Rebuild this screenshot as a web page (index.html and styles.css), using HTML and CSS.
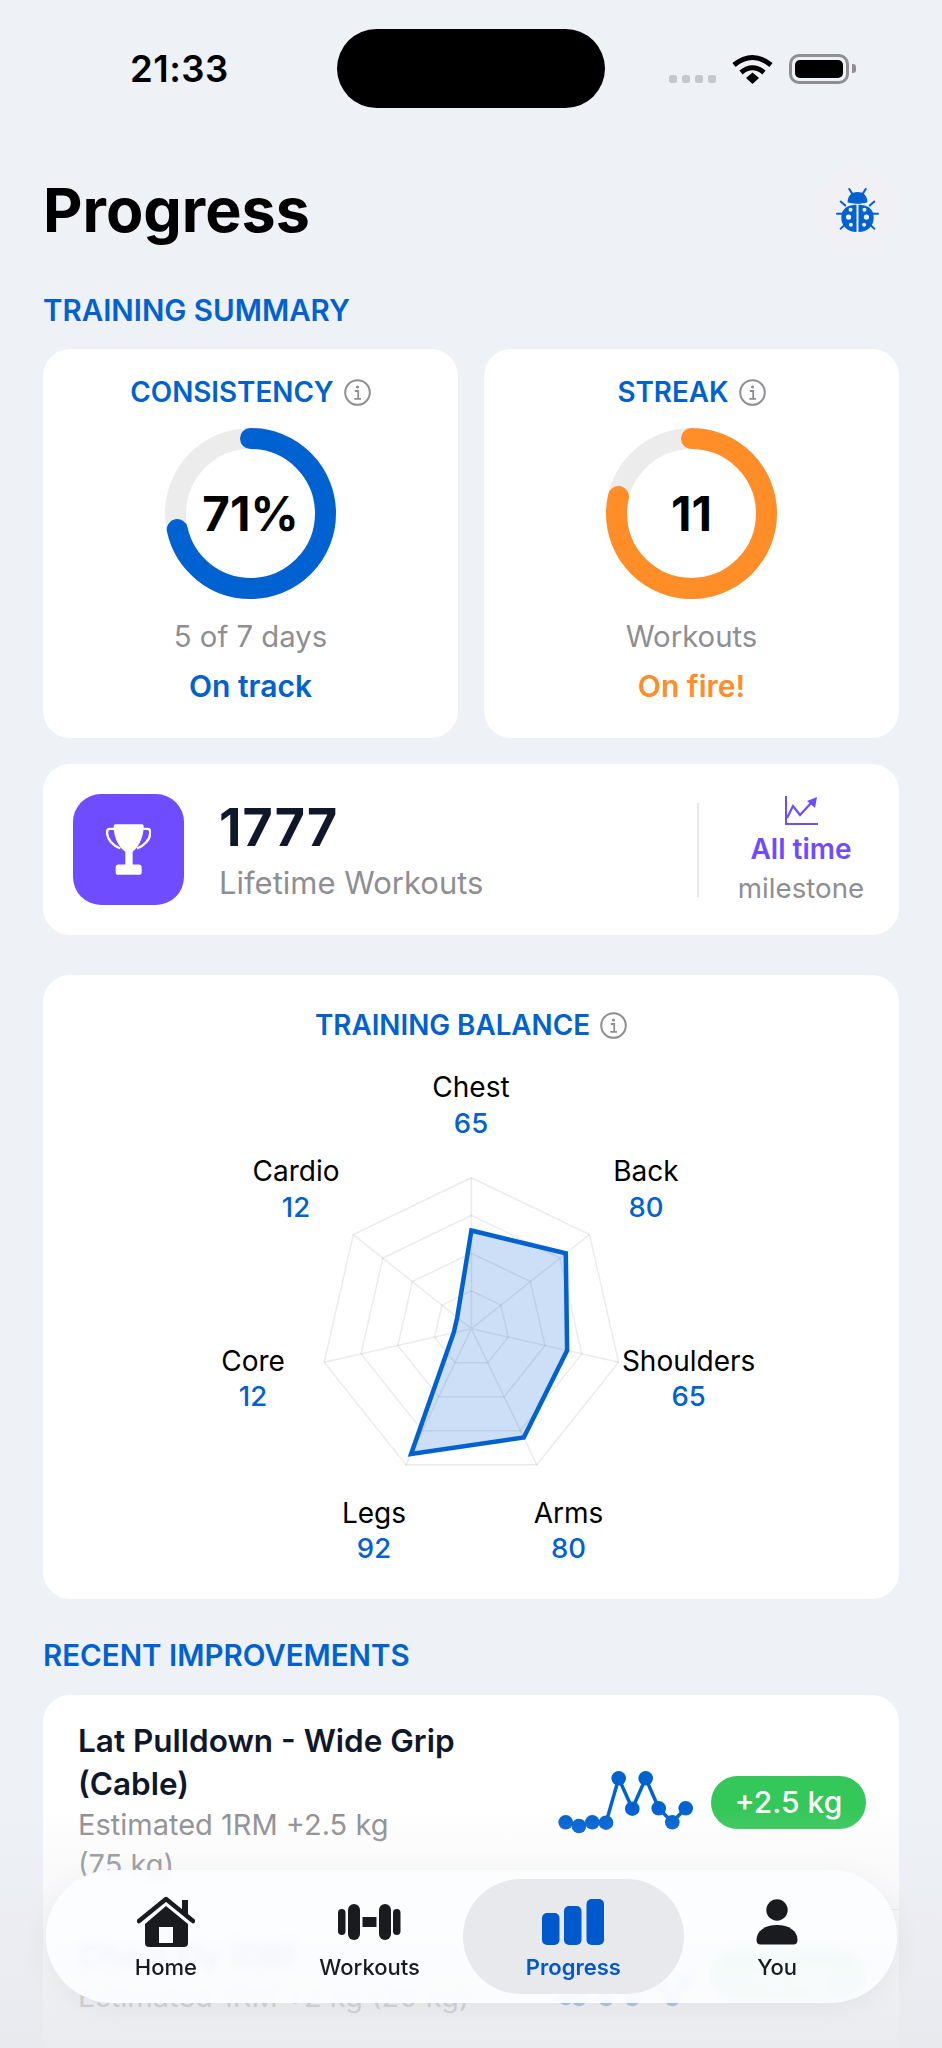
FILE: index.html
```html
<!DOCTYPE html>
<html lang="en">
<head>
    <meta charset="UTF-8">
    <meta name="viewport" content="width=device-width, initial-scale=1.0">
    <title>Progress</title>
    <link rel="stylesheet" href="styles.css">
</head>
<body>
    <div class="screen">
        <div class="status-bar">
            <span class="time">21:33</span>
            <div class="island"></div>
            <div class="signal"><i></i><i></i><i></i><i></i></div>
            <svg class="wifi" viewBox="0 0 41 30">
                <path d="M2 11 Q20.5 -4 39 11" fill="none" stroke="#000" stroke-width="5"/>
                <path d="M9 18.500 Q20.500 9 32 18.500" fill="none" stroke="#000" stroke-width="5"/>
                <path d="M14 24 L20.500 18.500 L27 24 L20.500 30 Z" fill="#000"/>
            </svg>
            <div class="battery"><div class="battery-fill"></div></div>
            <div class="battery-nub"></div>
        </div>

        <div class="header">
            <h1>Progress</h1>
            <div class="bug-button">
                <svg width="43" height="44" viewBox="585 475 130 133">
                    <path d="M620 518 C620 497 634 487 650 487 C666 487 680 497 680 518 C662 524 638 524 620 518 Z" fill="#0061d1"/>
                    <g stroke="#0061d1" stroke-width="6" stroke-linecap="round" fill="none">
                        <path d="M634 492 L625 478"/>
                        <path d="M666 492 L675 478"/>
                        <path d="M599 516 L613 528"/>
                        <path d="M701 516 L687 528"/>
                        <path d="M588 553 L606 553"/>
                        <path d="M712 553 L694 553"/>
                        <path d="M599 598 L613 585"/>
                        <path d="M701 598 L687 585"/>
                    </g>
                    <path d="M647 526 C620 526 601 538 601 565 C601 591 620 608 647 608 Z" fill="#0061d1"/>
                    <path d="M653 526 C680 526 699 538 699 565 C699 591 680 608 653 608 Z" fill="#0061d1"/>
                    <g fill="#f1f0f5">
                        <circle cx="629" cy="541" r="6"/>
                        <circle cx="623" cy="563" r="8"/>
                        <circle cx="630" cy="586" r="6"/>
                        <circle cx="671" cy="541" r="6"/>
                        <circle cx="677" cy="563" r="8"/>
                        <circle cx="670" cy="586" r="6"/>
                    </g>
                </svg>
            </div>
        </div>

        <div class="section-label summary-label">TRAINING SUMMARY</div>

        <div class="summary-row">
            <div class="card ring-card">
                <div class="card-title">
                    CONSISTENCY
                    <svg class="info" viewBox="0 0 27 27">
                        <circle cx="13.500" cy="13.500" r="12.300" fill="none" stroke="#8e8e93" stroke-width="2"/>
                        <circle cx="13.500" cy="8" r="1.600" fill="#8e8e93"/>
                        <path d="M10.800 12 H14.200 V19.500 M10.300 19.800 H17" fill="none" stroke="#8e8e93" stroke-width="1.800"/>
                    </svg>
                </div>
                <div class="ring">
                    <svg width="171" height="171" viewBox="0 0 171 171">
                        <circle cx="85.500" cy="85.500" r="75" class="ring-track"/>
                        <circle cx="85.500" cy="85.500" r="75" class="ring-value blue" stroke-dasharray="336.600 471.200" transform="rotate(-90 85.500 85.500)"/>
                    </svg>
                    <div class="ring-number">71%</div>
                </div>
                <div class="ring-sub">5 of 7 days</div>
                <div class="ring-status blue-text">On track</div>
            </div>

            <div class="card ring-card">
                <div class="card-title">
                    STREAK
                    <svg class="info" viewBox="0 0 27 27">
                        <circle cx="13.500" cy="13.500" r="12.300" fill="none" stroke="#8e8e93" stroke-width="2"/>
                        <circle cx="13.500" cy="8" r="1.600" fill="#8e8e93"/>
                        <path d="M10.800 12 H14.200 V19.500 M10.300 19.800 H17" fill="none" stroke="#8e8e93" stroke-width="1.800"/>
                    </svg>
                </div>
                <div class="ring">
                    <svg width="171" height="171" viewBox="0 0 171 171">
                        <circle cx="85.500" cy="85.500" r="75" class="ring-track"/>
                        <circle cx="85.500" cy="85.500" r="75" class="ring-value orange" stroke-dasharray="370 471.200" transform="rotate(-90 85.500 85.500)"/>
                    </svg>
                    <div class="ring-number">11</div>
                </div>
                <div class="ring-sub">Workouts</div>
                <div class="ring-status orange-text">On fire!</div>
            </div>
        </div>

        <div class="card lifetime-card">
            <div class="trophy-box">
                <svg width="45" height="51" viewBox="107 105 135 152">
                    <path d="M135 105 H215 C218 105 220 107 220 112 C220 150 200 178 187 188 V226 H205 C211 226 214 229 214 235 V250 C214 254 211 257 207 257 H143 C139 257 136 254 136 250 V235 C136 229 139 226 145 226 H165 V188 C150 178 130 150 130 112 C130 107 132 105 135 105 Z" fill="#fff"/>
                    <path d="M134 119 H118 C112 119 110 123 110 130 C110 150 128 170 150 178" fill="none" stroke="#fff" stroke-width="7"/>
                    <path d="M216 119 H232 C238 119 240 123 240 130 C240 150 222 170 200 178" fill="none" stroke="#fff" stroke-width="7"/>
                </svg>
            </div>
            <div class="lifetime-text">
                <div class="lifetime-number">1777</div>
                <div class="lifetime-label">Lifetime Workouts</div>
            </div>
            <div class="lifetime-divider"></div>
            <div class="milestone">
                <svg width="33" height="29" viewBox="0 0 33 29">
                    <path d="M1 0 V28 H33" fill="none" stroke="#6f4cff" stroke-width="2"/>
                    <path d="M2 22 L8 10 L15 19 L27 6" fill="none" stroke="#6f4cff" stroke-width="2.200"/>
                    <path d="M22 5 L32 1 L30 12 Z" fill="#6f4cff"/>
                </svg>
                <div class="milestone-top">All time</div>
                <div class="milestone-bottom">milestone</div>
            </div>
        </div>

        <div class="card balance-card">
            <div class="card-title">
                TRAINING BALANCE
                <svg class="info" viewBox="0 0 27 27">
                    <circle cx="13.500" cy="13.500" r="12.300" fill="none" stroke="#8e8e93" stroke-width="2"/>
                    <circle cx="13.500" cy="8" r="1.600" fill="#8e8e93"/>
                    <path d="M10.800 12 H14.200 V19.500 M10.300 19.800 H17" fill="none" stroke="#8e8e93" stroke-width="1.800"/>
                </svg>
            </div>
            <svg class="radar" width="856" height="557" viewBox="0 0 856 557">
                <g transform="translate(428.400 286.700)">
                    <g class="radar-grid">
                        <polygon points="0,-151 118.100,-94.100 147.200,33.600 65.500,136.100 -65.500,136.100 -147.200,33.600 -118.100,-94.100"/>
                        <polygon points="0,-113.300 88.500,-70.600 110.400,25.200 49.100,102 -49.100,102 -110.400,25.200 -88.500,-70.600"/>
                        <polygon points="0,-75.500 59,-47.100 73.600,16.800 32.800,68 -32.800,68 -73.600,16.800 -59,-47.100"/>
                        <polygon points="0,-37.800 29.500,-23.500 36.800,8.400 16.400,34 -16.400,34 -36.800,8.400 -29.500,-23.500"/>
                        <path d="M0 0 L0 -151 M0 0 L118.100 -94.100 M0 0 L147.200 33.600 M0 0 L65.500 136.100 M0 0 L-65.500 136.100 M0 0 L-147.200 33.600 M0 0 L-118.100 -94.100"/>
                    </g>
                    <polygon class="radar-shape" points="0,-98.200 94.400,-75.300 95.700,21.800 52.400,108.800 -60.300,125.200 -17.700,4 -14.200,-11.300"/>
                </g>
                <text class="radar-name" x="428" y="55">Chest</text>
                <text class="radar-num" x="428" y="91">65</text>
                <text class="radar-name" x="603" y="139">Back</text>
                <text class="radar-num" x="603" y="175">80</text>
                <text class="radar-name" x="645.600" y="329">Shoulders</text>
                <text class="radar-num" x="645.600" y="364">65</text>
                <text class="radar-name" x="525.600" y="481">Arms</text>
                <text class="radar-num" x="525.600" y="516">80</text>
                <text class="radar-name" x="331" y="481">Legs</text>
                <text class="radar-num" x="331" y="516">92</text>
                <text class="radar-name" x="210" y="329">Core</text>
                <text class="radar-num" x="210" y="364">12</text>
                <text class="radar-name" x="253" y="139">Cardio</text>
                <text class="radar-num" x="253" y="175">12</text>
            </svg>
        </div>

        <div class="section-label recent-label">RECENT IMPROVEMENTS</div>

        <div class="card recent-card">
            <div class="row">
                <div class="row-text">
                    <div class="row-title">Lat Pulldown - Wide Grip (Cable)</div>
                    <div class="row-sub">Estimated 1RM +2.5 kg (75&nbsp;kg)</div>
                </div>
                <svg class="spark" width="140" height="68" viewBox="0 0 140 68">
                    <polyline points="10.700,54.300 24,58 37.300,54.300 51,54.700 63.700,10.300 77.300,40.700 90.700,10.300 103.700,40.300 117.300,54.300 130.700,40.300"/>
                    <circle cx="10.700" cy="54.300" r="7.300"/>
                    <circle cx="24" cy="58" r="7.300"/>
                    <circle cx="37.300" cy="54.300" r="7.300"/>
                    <circle cx="51" cy="54.700" r="7.300"/>
                    <circle cx="63.700" cy="10.300" r="7.300"/>
                    <circle cx="77.300" cy="40.700" r="7.300"/>
                    <circle cx="90.700" cy="10.300" r="7.300"/>
                    <circle cx="103.700" cy="40.300" r="7.300"/>
                    <circle cx="117.300" cy="54.300" r="7.300"/>
                    <circle cx="130.700" cy="40.300" r="7.300"/>
                </svg>
                <div class="badge">+2.5 kg</div>
            </div>
            <div class="row">
                <div class="row-text">
                    <div class="row-title">Chest Fly (DB)</div>
                    <div class="row-sub">Estimated 1RM +2 kg (20 kg)</div>
                </div>
                <svg class="spark" width="140" height="68" viewBox="0 0 140 68">
                    <polyline points="10.700,56 24,57 37.300,8 51,57 63.700,8 77.300,57 90.700,40 103.700,40 117.300,57 130.700,40"/>
                    <circle cx="10.700" cy="56" r="7.300"/>
                    <circle cx="24" cy="57" r="7.300"/>
                    <circle cx="37.300" cy="8" r="7.300"/>
                    <circle cx="51" cy="57" r="7.300"/>
                    <circle cx="63.700" cy="8" r="7.300"/>
                    <circle cx="77.300" cy="57" r="7.300"/>
                    <circle cx="90.700" cy="40" r="7.300"/>
                    <circle cx="103.700" cy="40" r="7.300"/>
                    <circle cx="117.300" cy="57" r="7.300"/>
                    <circle cx="130.700" cy="40" r="7.300"/>
                </svg>
                <div class="badge">+2 kg</div>
            </div>
        </div>

        <div class="bottom-fade"></div>

        <div class="tab-bar">
            <div class="tab">
                <div class="tab-icon">
                    <svg width="58" height="52" viewBox="0 0 58 52">
                        <path d="M45 4 H51 V18 H45 Z" fill="#1a1b1f"/>
                        <path d="M2 25 L29 3 L56 25" fill="none" stroke="#1a1b1f" stroke-width="4.500" stroke-linecap="round" stroke-linejoin="round"/>
                        <path d="M29 10 L51 28 V47 C51 50 49 51 47 51 H12 C10 51 8 50 8 47 V28 Z" fill="#1a1b1f"/>
                        <rect x="22" y="31" width="14" height="16" fill="#fbfcff"/>
                    </svg>
                </div>
                <div class="tab-label">Home</div>
            </div>
            <div class="tab">
                <div class="tab-icon">
                    <svg width="63" height="36" viewBox="0 0 63 36">
                        <rect x="0" y="5" width="7.500" height="26" rx="3.700" fill="#1a1b1f"/>
                        <rect x="10" y="0" width="12" height="36" rx="6" fill="#1a1b1f"/>
                        <rect x="24.500" y="13" width="14" height="10" fill="#1a1b1f"/>
                        <rect x="41" y="0" width="12" height="36" rx="6" fill="#1a1b1f"/>
                        <rect x="55" y="5" width="7.500" height="26" rx="3.700" fill="#1a1b1f"/>
                    </svg>
                </div>
                <div class="tab-label">Workouts</div>
            </div>
            <div class="tab active">
                <div class="tab-icon">
                    <svg width="62" height="46" viewBox="0 0 62 46">
                        <rect x="0" y="14" width="17.500" height="32" rx="5" fill="#0059cc"/>
                        <rect x="22" y="7" width="17.500" height="39" rx="5" fill="#0059cc"/>
                        <rect x="44.500" y="0" width="17.500" height="46" rx="5" fill="#0059cc"/>
                    </svg>
                </div>
                <div class="tab-label">Progress</div>
            </div>
            <div class="tab">
                <div class="tab-icon">
                    <svg width="42" height="46" viewBox="0 0 42 46">
                        <circle cx="21" cy="11" r="10.700" fill="#1a1b1f"/>
                        <path d="M0.500 41 C0.500 32 9 26 21 26 C33 26 41.500 32 41.500 41 C41.500 44 40 45.500 37.500 45.500 H4.500 C2 45.500 0.500 44 0.500 41 Z" fill="#1a1b1f"/>
                    </svg>
                </div>
                <div class="tab-label">You</div>
            </div>
        </div>
    </div>
</body>
</html>
```

FILE: styles.css
```css
* {
    box-sizing: border-box;
}
body {
    margin: 0;
    padding: 0;
    background-color: #eef1f6;
    font-family: Inter, "Noto Sans", sans-serif;
}
.screen {
    position: relative;
    width: 942px;
    height: 2048px;
    overflow: hidden;
    background-color: #eef1f6;
}

/* status bar */
.status-bar {
    display: flex;
    align-items: center;
    padding: 29px 0 0 130px;
}
.time {
    width: 207px;
    font-size: 36.5px;
    font-weight: 600;
    color: #000;
    letter-spacing: 0.5px;
}
.island {
    width: 268px;
    height: 79px;
    border-radius: 40px;
    background-color: #000;
}
.signal {
    display: flex;
    gap: 5px;
    margin: 21px 0 0 64px;
}
.signal i {
    width: 8px;
    height: 8px;
    border-radius: 2.5px;
    background-color: #c4c7cc;
}
.wifi {
    width: 41px;
    height: 30px;
    margin-left: 16px;
}
.battery {
    width: 60px;
    height: 30px;
    margin-left: 16px;
    padding: 3px;
    border: 3px solid #8e8e93;
    border-radius: 10px;
}
.battery-fill {
    height: 100%;
    border-radius: 5px;
    background-color: #000;
}
.battery-nub {
    width: 4px;
    height: 9px;
    margin-left: 3px;
    border-radius: 0 3px 3px 0;
    background-color: #8e8e93;
}

/* header */
.header {
    display: flex;
    align-items: center;
    justify-content: space-between;
    height: 86px;
    margin-top: 59px;
    padding: 0 42px 0 43px;
}
h1 {
    margin: 0;
    font-size: 61px;
    font-weight: 700;
    color: #000;
}
.bug-button {
    display: flex;
    align-items: center;
    justify-content: center;
    width: 86px;
    height: 86px;
    border-radius: 50%;
    background-color: #f1f0f5;
}

.section-label {
    padding-left: 43px;
    font-size: 29.5px;
    font-weight: 600;
    line-height: 34px;
    color: #0061d1;
}
.summary-label {
    margin-top: 40px;
}
.recent-label {
    margin-top: 39px;
}

.card {
    border-radius: 27px;
    background-color: #fff;
}
.card-title {
    display: flex;
    align-items: center;
    justify-content: center;
    gap: 10px;
    font-size: 27.8px;
    font-weight: 600;
    line-height: 34px;
    color: #0061d1;
}
.info {
    width: 27px;
    height: 27px;
}

/* rings */
.summary-row {
    display: flex;
    gap: 26px;
    margin-top: 22px;
    padding: 0 43px;
}
.ring-card {
    display: flex;
    flex-direction: column;
    align-items: center;
    flex: 1;
    padding: 26px 0 34px;
}
.ring {
    position: relative;
    width: 171px;
    height: 171px;
    margin-top: 19px;
}
.ring svg {
    display: block;
}
.ring-track {
    fill: none;
    stroke: #ececec;
    stroke-width: 21px;
}
.ring-value {
    fill: none;
    stroke-width: 21px;
    stroke-linecap: round;
}
.ring-value.blue {
    stroke: #0061d1;
}
.ring-value.orange {
    stroke: #ff8d28;
}
.ring-number {
    position: absolute;
    inset: 0;
    display: flex;
    align-items: center;
    justify-content: center;
    font-size: 47.5px;
    font-weight: 700;
    color: #000;
}
.ring-sub {
    margin-top: 20px;
    font-size: 29.3px;
    line-height: 36px;
    color: #8e8e93;
}
.ring-status {
    margin-top: 13px;
    font-size: 30px;
    font-weight: 600;
    line-height: 36px;
}
.blue-text {
    color: #0061d1;
}
.orange-text {
    color: #ff8d28;
}

/* lifetime */
.lifetime-card {
    display: flex;
    align-items: center;
    height: 171px;
    margin: 26px 43px 0;
    padding: 0 36px 0 30px;
}
.trophy-box {
    display: flex;
    align-items: center;
    justify-content: center;
    width: 111px;
    height: 111px;
    border-radius: 28px;
    background-color: #6f4cff;
}
.lifetime-text {
    flex: 1;
    margin-left: 35px;
}
.lifetime-number {
    font-size: 52px;
    font-weight: 700;
    line-height: 58px;
    letter-spacing: 1px;
    color: #0f172a;
}
.lifetime-label {
    margin-top: 8px;
    font-size: 31px;
    line-height: 36px;
    color: #8e8e93;
}
.lifetime-divider {
    width: 2px;
    height: 94px;
    margin-right: 40px;
    background-color: #e8e8ec;
}
.milestone {
    display: flex;
    flex-direction: column;
    align-items: center;
    width: 124px;
}
.milestone-top {
    margin-top: 7px;
    font-size: 28px;
    font-weight: 600;
    line-height: 34px;
    color: #6f4cff;
}
.milestone-bottom {
    margin-top: 6px;
    font-size: 27.7px;
    line-height: 32px;
    color: #8e8e93;
}

/* radar */
.balance-card {
    height: 624px;
    margin: 40px 43px 0;
    padding-top: 33px;
}
.radar {
    display: block;
}
.radar-grid polygon,
.radar-grid path {
    fill: none;
    stroke: rgba(0, 0, 0, 0.08);
    stroke-width: 1.5px;
}
.radar-shape {
    fill: rgba(0, 97, 209, 0.2);
    stroke: #0061d1;
    stroke-width: 4.5px;
}
.radar-name {
    font-size: 28px;
    font-weight: 400;
    fill: #000;
    text-anchor: middle;
}
.radar-num {
    font-size: 27.5px;
    font-weight: 500;
    fill: #0061d1;
    text-anchor: middle;
}

/* recent improvements */
.recent-card {
    min-height: 420px;
    margin: 23px 43px 0;
    padding-left: 35px;
}
.row {
    display: flex;
    align-items: center;
    padding: 24px 33px 24px 0;
    border-bottom: 1px solid #e6e6ea;
}
.row-text {
    width: 400px;
    margin-right: auto;
}
.row-title {
    font-size: 31.5px;
    font-weight: 600;
    line-height: 43px;
    color: #0f172a;
}
.row-sub {
    font-size: 29px;
    line-height: 40px;
    color: #8e8e93;
}
.spark {
    flex-shrink: 0;
}
.spark polyline {
    fill: none;
    stroke: #0061d1;
    stroke-width: 3.5px;
}
.spark circle {
    fill: #0061d1;
}
.badge {
    flex-shrink: 0;
    width: 155px;
    margin-left: 16px;
    border-radius: 27px;
    background-color: #34c759;
    font-size: 30px;
    font-weight: 500;
    line-height: 53px;
    text-align: center;
    color: #fff;
}

/* fade and tab bar sit over the scrolled content */
.bottom-fade {
    position: absolute;
    left: 0;
    right: 0;
    bottom: 0;
    height: 240px;
    background: linear-gradient(to bottom, rgba(232, 233, 237, 0), rgba(232, 233, 237, 0.9));
}
.tab-bar {
    position: absolute;
    left: 46px;
    right: 45px;
    bottom: 45px;
    display: grid;
    grid-template-columns: repeat(4, 1fr);
    height: 133px;
    padding: 9px 18px;
    border-radius: 67px;
    background-color: rgba(252, 253, 255, 0.92);
    backdrop-filter: blur(4px);
    box-shadow: 0 6px 30px rgba(0, 0, 0, 0.05);
}
.tab {
    display: flex;
    flex-direction: column;
    align-items: center;
    padding-top: 17px;
}
.tab.active {
    margin: 0 -9px;
    border-radius: 58px;
    background-color: #e8e9ec;
}
.tab-icon {
    display: flex;
    align-items: center;
    justify-content: center;
    height: 52px;
}
.tab-label {
    margin-top: 5px;
    font-size: 22px;
    font-weight: 500;
    line-height: 28px;
    color: #1a1b1f;
}
.tab.active .tab-label {
    font-weight: 600;
    color: #0059cc;
}
```
